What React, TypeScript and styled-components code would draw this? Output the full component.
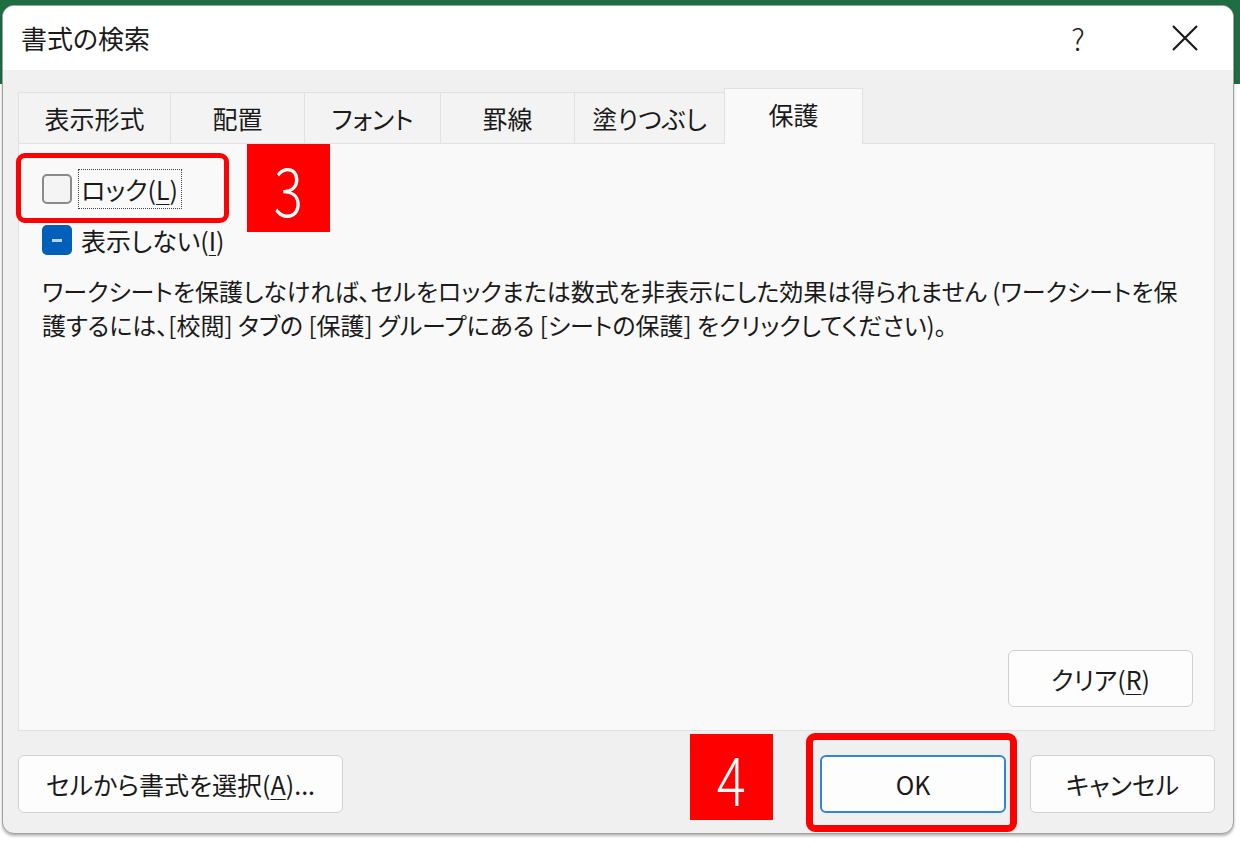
import React from 'react';
import styled, { createGlobalStyle } from 'styled-components';

const GlobalStyle = createGlobalStyle`
  html, body {
    margin: 0;
    padding: 0;
    background: #ffffff;
  }
  body {
    font-family: "Noto Sans CJK JP", "Noto Sans", sans-serif;
    font-feature-settings: "palt";
    color: #1a1a1a;
  }
`;

const Page = styled.div`
  position: relative;
  width: 1240px;
  height: 864px;
  box-sizing: border-box;
  padding: 5px 0 0 2px;
  overflow: hidden;
  background: linear-gradient(to bottom, #1f6e43 0, #1f6e43 84px, #ffffff 84px);
`;

const Dialog = styled.div`
  width: 1232px;
  height: 829px;
  box-sizing: border-box;
  display: flex;
  flex-direction: column;
  border: 1px solid #a2a2a2;
  border-radius: 12px;
  overflow: hidden;
  background: #f0f0f0;
  box-shadow: 0 2px 3px rgba(0, 0, 0, 0.3);
`;

const TitleBar = styled.div`
  height: 64px;
  flex: none;
  display: flex;
  align-items: center;
  padding: 0 18px 0 18px;
  background: #ffffff;
`;

const Title = styled.div`
  flex: 1;
  font-size: 26px;
  line-height: 1;
`;

const HelpGlyph = styled.div`
  width: 60px;
  text-align: center;
  font-size: 30px;
  font-weight: 300;
  line-height: 1;
  color: #222;
`;

const CloseGlyph = styled.div`
  width: 60px;
  margin-left: 47px;
  display: flex;
  justify-content: center;
  align-items: center;
`;

const Body = styled.div`
  flex: 1;
  display: flex;
  flex-direction: column;
  padding: 18px 18px 0 15px;
`;

const TabStrip = styled.div`
  height: 55px;
  flex: none;
  display: flex;
  align-items: flex-end;
`;

const Tab = styled.div<{ $width: number; $active?: boolean }>`
  width: ${({ $width }) => $width}px;
  height: ${({ $active }) => ($active ? 56 : 51)}px;
  margin-bottom: ${({ $active }) => ($active ? -1 : 0)}px;
  box-sizing: border-box;
  display: flex;
  align-items: center;
  justify-content: center;
  padding-bottom: ${({ $active }) => ($active ? 5 : 0)}px;
  border: 1px solid #e1e1e1;
  border-bottom: none;
  border-right: none;
  background: ${({ $active }) => ($active ? '#f9f9f9' : '#f3f3f3')};
  font-size: 25px;
  position: relative;
  z-index: ${({ $active }) => ($active ? 1 : 0)};
  &:last-child {
    border-right: 1px solid #e1e1e1;
  }
`;

const Panel = styled.div`
  height: 588px;
  flex: none;
  box-sizing: border-box;
  display: flex;
  flex-direction: column;
  padding: 25px 21px 23px 23px;
  border: 1px solid #e1e1e1;
  background: #f9f9f9;
`;

const CheckRow = styled.div<{ $gap?: number }>`
  height: 40px;
  display: flex;
  align-items: center;
  gap: 6px;
  margin-top: ${({ $gap }) => $gap ?? 0}px;
`;

const Box = styled.div<{ $mixed?: boolean }>`
  width: 30px;
  height: 30px;
  box-sizing: border-box;
  border-radius: 5px;
  display: flex;
  align-items: center;
  justify-content: center;
  border: 2px solid ${({ $mixed }) => ($mixed ? '#005fb8' : '#8a8a8a')};
  background: ${({ $mixed }) => ($mixed ? '#005fb8' : '#f4f4f4')};
`;

const Dash = styled.div`
  width: 10px;
  height: 3px;
  background: #b9d3ee;
`;

const Label = styled.span<{ $focused?: boolean }>`
  height: 40px;
  box-sizing: border-box;
  display: flex;
  align-items: center;
  padding: 0 4px 0 3px;
  font-size: 25px;
  outline: ${({ $focused }) => ($focused ? '1px dotted #444' : 'none')};
  outline-offset: -1px;
  u {
    text-underline-offset: 4px;
    text-decoration-thickness: 1px;
  }
`;

const Notice = styled.p`
  margin: 14px 0 0 0;
  font-size: 24px;
  line-height: 34px;
  white-space: nowrap;
`;

const Button = styled.button<{ $width: number; $primary?: boolean }>`
  width: ${({ $width }) => $width}px;
  height: 58px;
  box-sizing: border-box;
  border-radius: 6px;
  border: ${({ $primary }) => ($primary ? '2px solid #2f86d6' : '1px solid #d0d0d0')};
  background: #fdfdfd;
  font-family: inherit;
  font-feature-settings: "palt";
  font-size: 25px;
  color: #1a1a1a;
  padding: 0;
  u {
    text-underline-offset: 4px;
    text-decoration-thickness: 1px;
  }
`;

const ClearButton = styled(Button)`
  height: 57px;
  margin-top: auto;
  align-self: flex-end;
`;

const Footer = styled.div`
  margin-top: 24px;
  display: flex;
  align-items: center;
  gap: 24px;
`;

const Spacer = styled.div`
  flex: 1;
`;

const Highlight = styled.div<{ $x: number; $y: number; $w: number; $h: number; $stroke: number }>`
  position: absolute;
  left: ${({ $x }) => $x}px;
  top: ${({ $y }) => $y}px;
  width: ${({ $w }) => $w}px;
  height: ${({ $h }) => $h}px;
  box-sizing: border-box;
  border: ${({ $stroke }) => $stroke}px solid #ff0000;
  border-radius: 9px;
`;

const StepBadge = styled.div<{ $x: number; $y: number; $w: number; $h: number }>`
  position: absolute;
  left: ${({ $x }) => $x}px;
  top: ${({ $y }) => $y}px;
  width: ${({ $w }) => $w}px;
  height: ${({ $h }) => $h}px;
  display: flex;
  align-items: center;
  justify-content: center;
  background: #ff0000;
  color: #ffffff;
  font-family: "Noto Sans CJK JP", "Noto Sans", sans-serif;
  font-weight: 200;
  font-size: 68px;
  line-height: 1;
  span {
    display: inline-block;
    transform: scaleX(0.8);
  }
`;

const tabs = [
  { label: '表示形式', width: 152 },
  { label: '配置', width: 134 },
  { label: 'フォント', width: 136 },
  { label: '罫線', width: 134 },
  { label: '塗りつぶし', width: 150 },
  { label: '保護', width: 139, active: true },
];

const App: React.FC = () => (
  <>
    <GlobalStyle />
    <Page>
      <Dialog>
        <TitleBar>
          <Title>書式の検索</Title>
          <HelpGlyph>?</HelpGlyph>
          <CloseGlyph>
            <svg width="26" height="26" viewBox="0 0 26 26">
              <path d="M1 1 L25 25 M25 1 L1 25" stroke="#1a1a1a" strokeWidth="2.2" fill="none" />
            </svg>
          </CloseGlyph>
        </TitleBar>
        <Body>
          <TabStrip>
            {tabs.map((t) => (
              <Tab key={t.label} $width={t.width} $active={t.active}>
                {t.label}
              </Tab>
            ))}
          </TabStrip>
          <Panel>
            <CheckRow>
              <Box />
              <Label $focused>
                ロック(<u>L</u>)
              </Label>
            </CheckRow>
            <CheckRow $gap={11}>
              <Box $mixed>
                <Dash />
              </Box>
              <Label>
                表示しない(<u>I</u>)
              </Label>
            </CheckRow>
            <Notice>
              ワークシートを保護しなければ、セルをロックまたは数式を非表示にした効果は得られません (ワークシートを保
              <br />
              護するには、[校閲] タブの [保護] グループにある [シートの保護] をクリックしてください)。
            </Notice>
            <ClearButton $width={185}>
              クリア(<u>R</u>)
            </ClearButton>
          </Panel>
          <Footer>
            <Button $width={325}>
              セルから書式を選択(<u>A</u>)...
            </Button>
            <Spacer />
            <Button $width={186} $primary>
              OK
            </Button>
            <Button $width={185}>キャンセル</Button>
          </Footer>
        </Body>
      </Dialog>
      <Highlight $x={16} $y={153} $w={213} $h={70} $stroke={5} />
      <StepBadge $x={247} $y={144} $w={83} $h={88}>
        <span>3</span>
      </StepBadge>
      <StepBadge $x={690} $y={734} $w={83} $h={86}>
        <span>4</span>
      </StepBadge>
      <Highlight $x={806} $y={733} $w={211} $h={99} $stroke={7} />
    </Page>
  </>
);

export default App;
